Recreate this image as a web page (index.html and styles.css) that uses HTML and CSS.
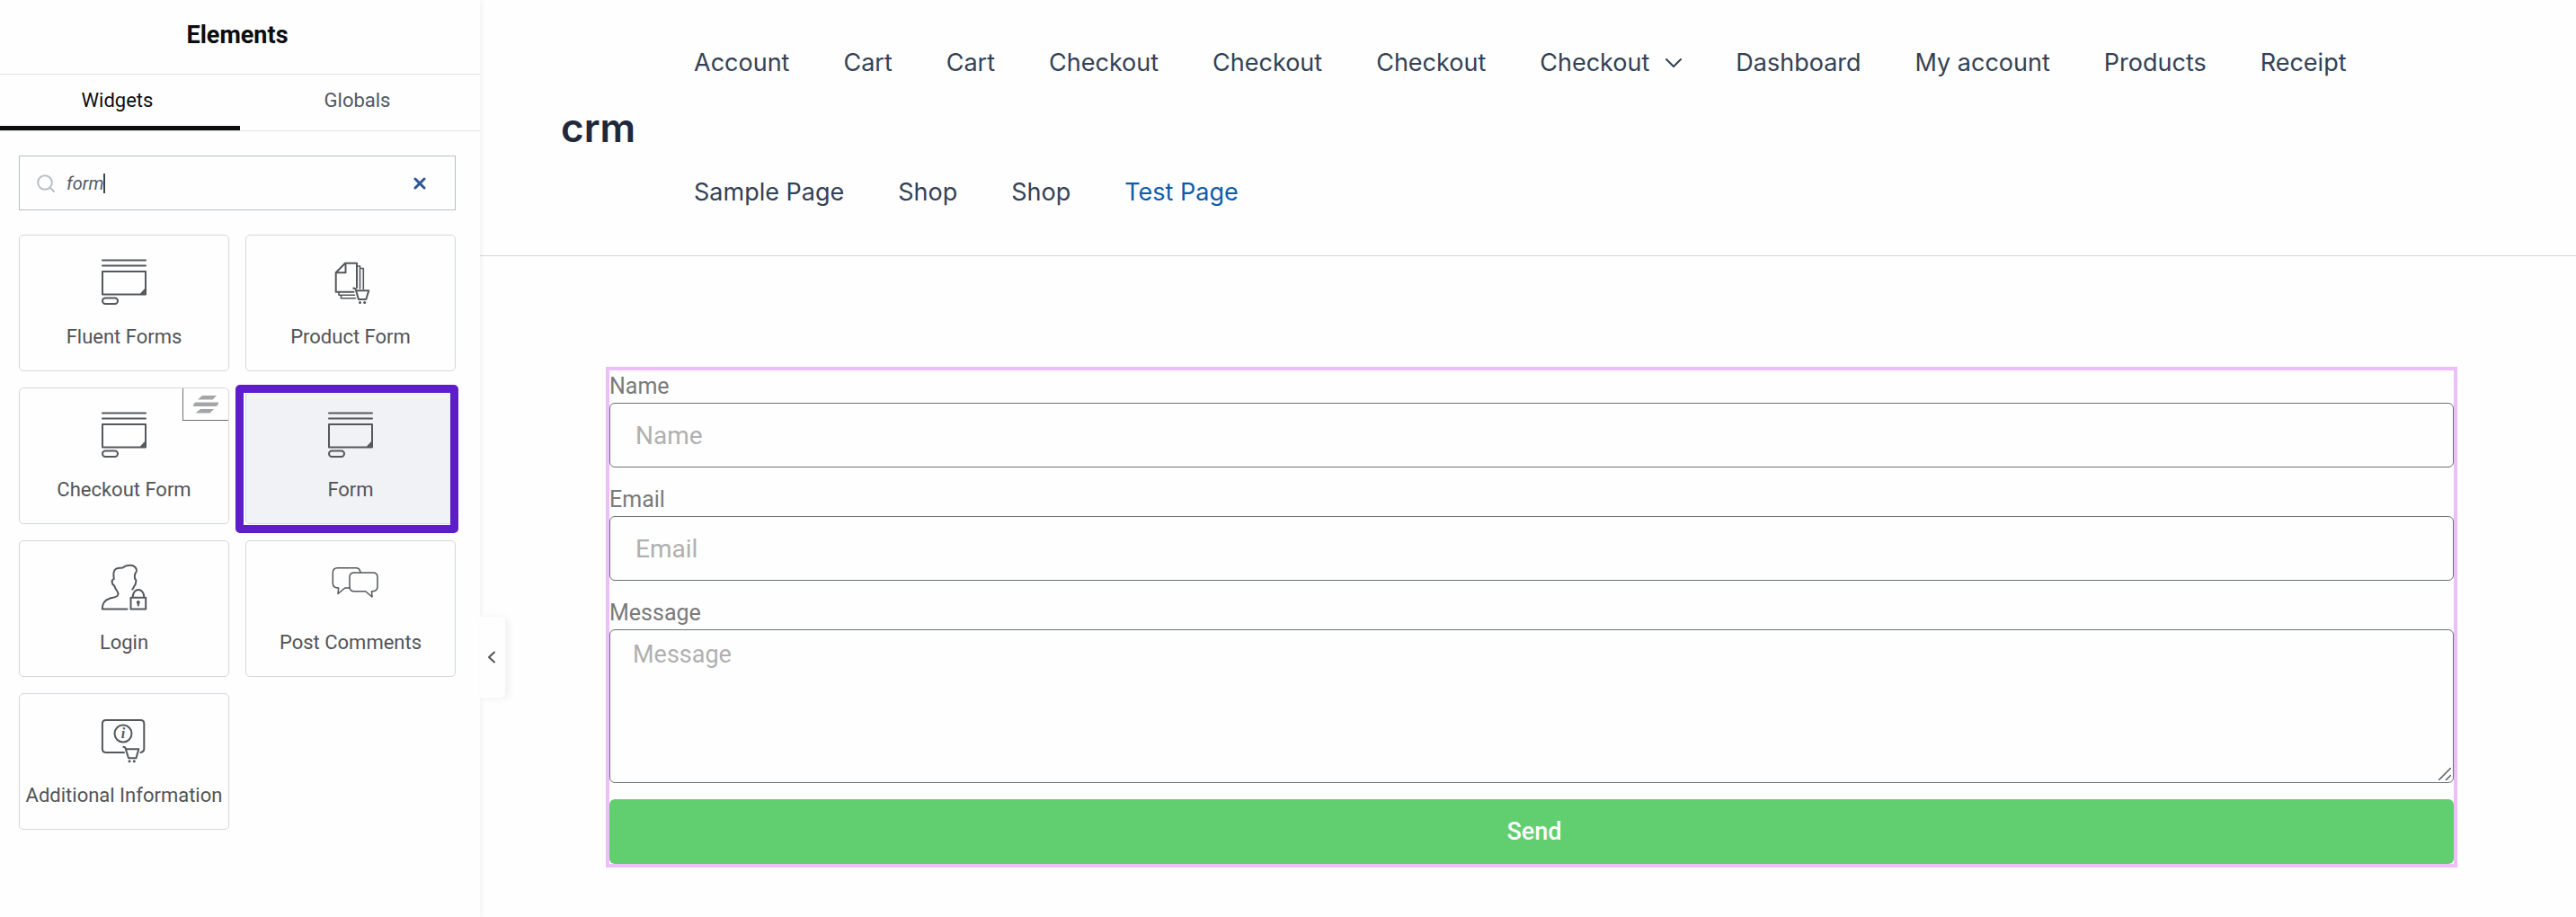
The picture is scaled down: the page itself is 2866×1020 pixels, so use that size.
FILE: index.html
```html
<!DOCTYPE html>
<html lang="en">
<head>
<meta charset="utf-8">
<meta name="viewport" content="width=device-width, initial-scale=1">
<title>Elements</title>
<link rel="stylesheet" href="styles.css">
</head>
<body>
<svg class="sprite" aria-hidden="true">
  <symbol id="icon-form" viewBox="0 0 50 52">
    <path d="M1 1.5H49M1 7.5H49M1 14H49V39.5H1ZM43.5 39.5L49 33.5"/>
    <path d="M46 39L49 36"/>
    <rect x="1" y="43.5" width="17" height="6.5" rx="3.2"/>
  </symbol>
</svg>
<div class="editor">
  <aside class="panel">
    <header class="panel-header"><h1>Elements</h1></header>
    <div class="tabs" role="tablist">
      <button class="tab tab-active" type="button" role="tab" aria-selected="true">Widgets</button>
      <button class="tab" type="button" role="tab" aria-selected="false">Globals</button>
    </div>
    <div class="panel-body">
      <div class="search">
        <svg class="search-icon" viewBox="0 0 20 20" aria-hidden="true"><circle cx="9" cy="9" r="7.8"/><path d="M14.5 14.5L19 19"/></svg>
        <input class="search-input" type="text" value="form" aria-label="Search widgets">
        <span class="caret"></span>
        <button class="search-clear" type="button" aria-label="Clear search"><svg viewBox="0 0 14 14"><path d="M2 2L12 12M12 2L2 12"/></svg></button>
      </div>
      <div class="widgets">
        <button class="widget" type="button">
          <svg class="icon" viewBox="0 0 50 52"><use href="#icon-form"/></svg>
          <span>Fluent Forms</span>
        </button>
        <button class="widget" type="button">
          <svg class="icon" viewBox="0 0 50 52">
            <path d="M28.5 36.7H8.7V15.3L19 4.7H32V32M19.5 5V15.3H9"/>
            <path d="M32 8H35.5V33M35.5 10.5H39.3V33.5M12 37V40.3H29.5M14.5 40.5V43.7H30.5" stroke-width="1.6"/>
            <path d="M28.3 32.5L30.5 33.3L34 45H42.3L45.3 35.2H31.2"/>
            <circle class="dot" cx="35.5" cy="48.5" r="1.5"/><circle class="dot" cx="40.7" cy="48.5" r="1.5"/>
          </svg>
          <span>Product Form</span>
        </button>
        <button class="widget" type="button">
          <svg class="icon" viewBox="0 0 50 52"><use href="#icon-form"/></svg>
          <span>Checkout Form</span>
          <span class="badge"><svg viewBox="0 0 28 20"><path d="M10 0H26L21.5 4.5H5ZM3.5 7.5H28Q28 12 24 12H0Q0 7.500 3.500 7.500ZM8 15H23L18.500 19.500H2.500Z"/></svg></span>
        </button>
        <button class="widget widget-selected" type="button">
          <svg class="icon" viewBox="0 0 50 52"><use href="#icon-form"/></svg>
          <span>Form</span>
        </button>
        <button class="widget" type="button">
          <svg class="icon" viewBox="0 0 50 52">
            <path d="M28.500 49.500H.8C.8 41.500 4.500 39 9 37.700C13 36.600 18.300 36.500 18.500 33C18.500 29.500 15.500 28 14.500 24.500C14.300 22.800 12.300 23 12 21C11.500 19.500 11 17 13.800 15.800C13.200 12 13 8.500 14.500 6.200C16.500 3 20 4 23.500 3.500C26 1.500 29 .8 32 .8C35 .8 36 1.500 37.500 3C40.500 6.500 38.500 8.500 37.200 10.500C36.500 12 37 14 37 15.700C39.500 17 38.200 20 37.500 22.500C36 24 36 25.500 34.300 27.500"/>
            <path d="M32.500 36.700H49.200V49.500H32.500ZM34.700 36.500C34.700 25.300 47.300 25.300 47.300 36.500M40.800 42V45.500"/>
            <circle class="dot" cx="40.800" cy="42" r="2"/>
          </svg>
          <span>Login</span>
        </button>
        <button class="widget" type="button">
          <svg class="icon icon-thin" viewBox="0 0 50 52">
            <path d="M36 9Q35.500 3.700 31 3.700H10.300Q5.300 3.700 5.300 9V21Q5.300 26 11.700 26L11 32.500L18.700 26H24"/>
            <path d="M29 9H50Q55 9 55 14V24.700Q55 29.700 48.500 29.700L49 36L41.700 29.700H29Q24 29.700 24 24.700V14Q24 9 29 9Z"/>
          </svg>
          <span>Post Comments</span>
        </button>
        <button class="widget" type="button">
          <svg class="icon" viewBox="0 0 50 52">
            <path d="M25 39H5Q.9 39 .9 35V7Q.9 3 5 3H43.300Q47.300 3 47.300 7V35Q47.300 38 43.500 39"/>
            <circle cx="24" cy="18" r="9.500"/>
            <path d="M24.300 32.800L26.300 33.500L30 45.300H38.500L41.300 35.300H27"/>
            <circle class="dot" cx="31" cy="48.700" r="1.500"/><circle class="dot" cx="36.300" cy="48.700" r="1.500"/>
            <text class="info-mark" x="24" y="23" text-anchor="middle">i</text>
          </svg>
          <span>Additional Information</span>
        </button>
      </div>
    </div>
    <button class="collapse" type="button" aria-label="Collapse panel"><svg viewBox="0 0 10 14"><path d="M8 1.500L2 7L8 12.500"/></svg></button>
  </aside>

  <main class="preview">
    <header class="site-header">
      <div class="site-header-inner">
        <a class="brand" href="#">crm</a>
        <nav class="menu" aria-label="Main">
          <a href="#">Account</a>
          <a href="#">Cart</a>
          <a href="#">Cart</a>
          <a href="#">Checkout</a>
          <a href="#">Checkout</a>
          <a href="#">Checkout</a>
          <a href="#">Checkout<svg class="chevron" viewBox="0 0 18 10"><path d="M1 1L9 9L17 1"/></svg></a>
          <a href="#">Dashboard</a>
          <a href="#">My account</a>
          <a href="#">Products</a>
          <a href="#">Receipt</a>
          <a href="#">Sample Page</a>
          <a href="#">Shop</a>
          <a href="#">Shop</a>
          <a class="current" href="#">Test Page</a>
        </nav>
      </div>
    </header>
    <section class="site-content">
      <form class="contact">
        <div class="field">
          <label for="name">Name</label>
          <input id="name" type="text" placeholder="Name">
        </div>
        <div class="field">
          <label for="email">Email</label>
          <input id="email" type="email" placeholder="Email">
        </div>
        <div class="field">
          <label for="message">Message</label>
          <textarea id="message" placeholder="Message"></textarea>
          <svg class="grip" viewBox="0 0 14 14" aria-hidden="true"><path d="M.5 13.500L13.500 .5M8.500 13.500L13.500 8.500"/></svg>
        </div>
        <button class="send" type="button">Send</button>
      </form>
    </section>
  </main>
</div>
</body>
</html>
```
FILE: styles.css
```css
* {
  box-sizing: border-box;
}

body {
  margin: 0;
  background: #fefefe;
  font-family: Roboto, "Liberation Sans", sans-serif;
}

button,
input,
textarea {
  font-family: inherit;
  margin: 0;
}

svg {
  fill: none;
  stroke-linecap: round;
  stroke-linejoin: round;
}

.sprite {
  display: none;
}

.editor {
  display: flex;
  min-height: 100vh;
}

/* Widget panel */

.panel {
  position: relative;
  flex: none;
  width: 534px;
  background: #fefefe;
  box-shadow: 0 0 8px rgba(0, 0, 0, 0.08);
}

.panel-header {
  display: flex;
  align-items: center;
  justify-content: center;
  height: 83px;
  padding: 0 6px 5px 0;
  border-bottom: 1px solid #e2e3e5;
}

.panel-header h1 {
  margin: 0;
  font-size: 27px;
  line-height: 32px;
  font-weight: 700;
  color: #0c0d0e;
}

.tabs {
  display: flex;
  height: 63px;
  border-bottom: 1px solid #e2e3e5;
}

.tab {
  width: 50%;
  padding: 0 6px 0 0;
  border: 0;
  border-bottom: 5px solid transparent;
  background: none;
  font-size: 22px;
  line-height: 28px;
  color: #515962;
}

.tab-active {
  border-bottom-color: #0c0d0e;
  color: #0c0d0e;
}

.panel-body {
  padding: 27px 27px 0 21px;
}

.search {
  display: flex;
  align-items: center;
  height: 61px;
  margin-bottom: 27px;
  padding: 0 32px 0 19px;
  border: 1px solid #babfc5;
}

.search-icon {
  width: 20px;
  height: 20px;
  margin-right: 13px;
  stroke: #babfc5;
  stroke-width: 2;
}

.search-input {
  field-sizing: content;
  padding: 0;
  border: 0;
  outline: 0;
  background: none;
  font-size: 20px;
  line-height: 24px;
  font-style: italic;
  color: #515962;
}

.caret {
  width: 2px;
  height: 22px;
  background: #3f444b;
}

.search-clear {
  display: flex;
  margin-left: auto;
  padding: 0;
  border: 0;
  background: none;
}

.search-clear svg {
  width: 14px;
  height: 14px;
  stroke: #2f5597;
  stroke-width: 3;
}

.widgets {
  display: grid;
  grid-template-columns: 1fr 1fr;
  gap: 18px;
}

.widget {
  position: relative;
  display: flex;
  flex-direction: column;
  align-items: center;
  height: 152px;
  padding: 26px 0 0;
  border: 1px solid #d5d8dc;
  border-radius: 5px;
  background: none;
  font-size: 22px;
  line-height: 28px;
  color: #515457;
  white-space: nowrap;
}

.icon {
  width: 50px;
  height: 52px;
  margin-bottom: 21px;
  overflow: visible;
  stroke: #54585c;
  stroke-width: 2;
}

.icon-thin {
  stroke-width: 1.5;
}

.dot {
  fill: #54585c;
  stroke: none;
}

.info-mark {
  fill: #54585c;
  stroke: none;
  font: italic 700 16px "Liberation Serif", serif;
}

.badge {
  position: absolute;
  top: 0;
  right: 0;
  display: flex;
  align-items: center;
  justify-content: center;
  width: 51px;
  height: 36px;
  border: solid #6d7075;
  border-width: 0 0 1px 1px;
}

.badge svg {
  width: 28px;
  height: 20px;
  fill: #a4a5a7;
}

.widget-selected {
  background: #f1f2f5;
}

.widget-selected::after {
  content: "";
  position: absolute;
  inset: -4px -4px -11px -12px;
  border: 9px solid #5d1dc9;
  border-radius: 5px;
}

.collapse {
  position: absolute;
  top: 686px;
  left: 100%;
  display: flex;
  align-items: center;
  width: 28px;
  height: 90px;
  padding: 0 8px;
  border: 0;
  border-radius: 0 5px 5px 0;
  background: #fefefe;
  box-shadow: 4px 1px 8px rgba(0, 0, 0, 0.06);
}

.collapse svg {
  flex: none;
  width: 10px;
  height: 14px;
  stroke: #515457;
  stroke-width: 2;
}

/* Page preview */

.preview {
  flex: 1;
  min-width: 0;
}

.site-header {
  padding: 16px 0 16px 8px;
  border-bottom: 1px solid #d6d7d9;
}

.site-header-inner {
  display: flex;
  align-items: center;
  max-width: 2160px;
  margin: 0 auto;
  font-family: Inter, "Liberation Sans", sans-serif;
}

.brand {
  width: 118px;
  font-size: 44px;
  line-height: 56px;
  font-weight: 600;
  color: #1e293b;
  text-decoration: none;
}

.menu {
  display: flex;
  flex: 1;
  flex-wrap: wrap;
  row-gap: 36px;
}

.menu a {
  display: flex;
  align-items: center;
  padding: 0 30px;
  font-size: 27px;
  line-height: 108px;
  color: #334155;
  text-decoration: none;
}

.menu .current {
  color: #0d5cab;
}

.chevron {
  width: 18px;
  height: 10px;
  margin-left: 18px;
  stroke: #334155;
  stroke-width: 2;
}

.site-content {
  max-width: 2168px;
  margin: 0 auto;
  padding: 123px 50px 40px 58px;
}

.contact {
  display: flex;
  flex-direction: column;
  gap: 18px;
  border: 4px solid #eebefb;
}

.field {
  position: relative;
  display: flex;
  flex-direction: column;
}

.field label {
  font-size: 25px;
  line-height: 36px;
  color: #7a7a7a;
}

.field input,
.field textarea {
  width: 100%;
  border: 1px solid #69727d;
  border-radius: 6px;
  outline: 0;
  background: #fefefe;
  color: #333;
}

.field input {
  height: 72px;
  padding: 0 28px;
  font-size: 28px;
}

.field textarea {
  display: block;
  height: 171px;
  padding: 9px 25px;
  font-size: 27px;
  line-height: 36px;
  resize: none;
}

.field ::placeholder {
  color: #b0b0b0;
  opacity: 1;
}

.grip {
  position: absolute;
  right: 3px;
  bottom: 3px;
  width: 14px;
  height: 14px;
  stroke: #5c5c5c;
  stroke-width: 1.5;
}

.send {
  height: 72px;
  padding: 0 0 0 6px;
  border: 0;
  border-radius: 6px;
  background: #61ce70;
  font-size: 27px;
  font-weight: 500;
  color: #fff;
}
```
